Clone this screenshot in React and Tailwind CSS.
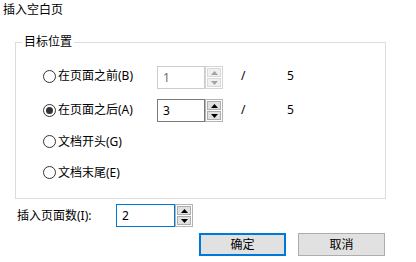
import React from "react";

function Arrow({ up, color }) {
  return (
    <svg width="7" height="4" viewBox="0 0 7 4" className="block">
      {up ? (
        <polygon points="0,4 7,4 3.5,0" fill={color} />
      ) : (
        <polygon points="0,0 7,0 3.5,4" fill={color} />
      )}
    </svg>
  );
}

function Spin({ value, variant }) {
  const disabled = variant === "disabled";
  const inputBorder =
    variant === "focus"
      ? "border-[#0078d7]"
      : disabled
      ? "border-[#cccccc]"
      : "border-[#7a7a7a]";
  const btnCls = disabled
    ? "bg-[#f0f0f0] border-[#d9d9d9]"
    : "bg-[#e1e1e1] border-[#adadad]";
  const arrow = disabled ? "#a3a3a3" : "#000000";
  return (
    <div className="flex h-[23px]">
      <div
        className={`flex-1 border ${inputBorder} bg-white flex items-center pl-[5px] text-[12px] leading-none ${
          disabled ? "text-[#6d6d6d]" : "text-black"
        }`}
      >
        {value}
      </div>
      <div
        className={`w-[18px] h-[23px] border ${
          disabled ? "border-[#d4d4d4]" : "border-[#b4b4b4]"
        } bg-white p-[1px] flex flex-col gap-[1px]`}
      >
        <div className={`flex-1 border ${btnCls} flex items-center justify-center`}>
          <Arrow up color={arrow} />
        </div>
        <div className={`flex-1 border ${btnCls} flex items-center justify-center`}>
          <Arrow color={arrow} />
        </div>
      </div>
    </div>
  );
}

function Radio({ checked, label }) {
  return (
    <div className="flex items-center gap-[2px]">
      <div className="w-[13px] h-[13px] rounded-full border border-[#333333] bg-white flex items-center justify-center">
        {checked && <div className="w-[7px] h-[7px] rounded-full bg-[#333333]" />}
      </div>
      <span className="text-[12px] leading-[16px] text-black">{label}</span>
    </div>
  );
}

export default function App() {
  return (
    <div className="w-[416px] h-[262px] bg-white overflow-hidden font-['Noto_Sans','Noto_Sans_CJK_SC',sans-serif] text-black select-none">
      <div className="pt-[2px] pl-[3px] text-[12px] leading-[16px]">插入空白页</div>

      <div className="relative ml-[15px] mt-[24px] w-[371px] h-[157px] border border-[#dcdcdc]">
        <span className="absolute left-[6px] top-[-9px] px-[2px] bg-white text-[12px] leading-[16px]">
          目标位置
        </span>
        <div className="pl-[27px] pt-[23px] flex flex-col">
          <div className="flex items-center h-[23px]">
            <div className="w-[114px] -mt-[3px]">
              <Radio label="在页面之前(B)" />
            </div>
            <div className="w-[66px]">
              <Spin value="1" variant="disabled" />
            </div>
            <span className="ml-[18px] w-[46px] text-[12px] -mt-[3px]">/</span>
            <span className="text-[12px] -mt-[3px]">5</span>
          </div>
          <div className="flex items-center h-[23px] mt-[10px]">
            <div className="w-[114px] -mt-[1px]">
              <Radio checked label="在页面之后(A)" />
            </div>
            <div className="w-[66px]">
              <Spin value="3" variant="normal" />
            </div>
            <span className="ml-[18px] w-[46px] text-[12px] -mt-[1px]">/</span>
            <span className="text-[12px] -mt-[1px]">5</span>
          </div>
          <div className="flex items-center h-[23px] mt-[8px]">
            <Radio label="文档开头(G)" />
          </div>
          <div className="flex items-center h-[23px] mt-[8px]">
            <Radio label="文档末尾(E)" />
          </div>
        </div>
      </div>

      <div className="flex items-center mt-[5px] pl-[17px]">
        <span className="w-[99px] text-[12px] leading-[16px]">插入页面数(I):</span>
        <div className="w-[77px]">
          <Spin value="2" variant="focus" />
        </div>
      </div>

      <div className="flex justify-end gap-[12px] mt-[6px] pr-[31px]">
        <button className="w-[87px] h-[23px] border-2 border-[#0078d7] bg-[#e1e1e1] text-[12px] leading-none flex items-center justify-center">
          确定
        </button>
        <button className="w-[87px] h-[23px] border border-[#adadad] bg-[#e1e1e1] text-[12px] leading-none flex items-center justify-center">
          取消
        </button>
      </div>
    </div>
  );
}
